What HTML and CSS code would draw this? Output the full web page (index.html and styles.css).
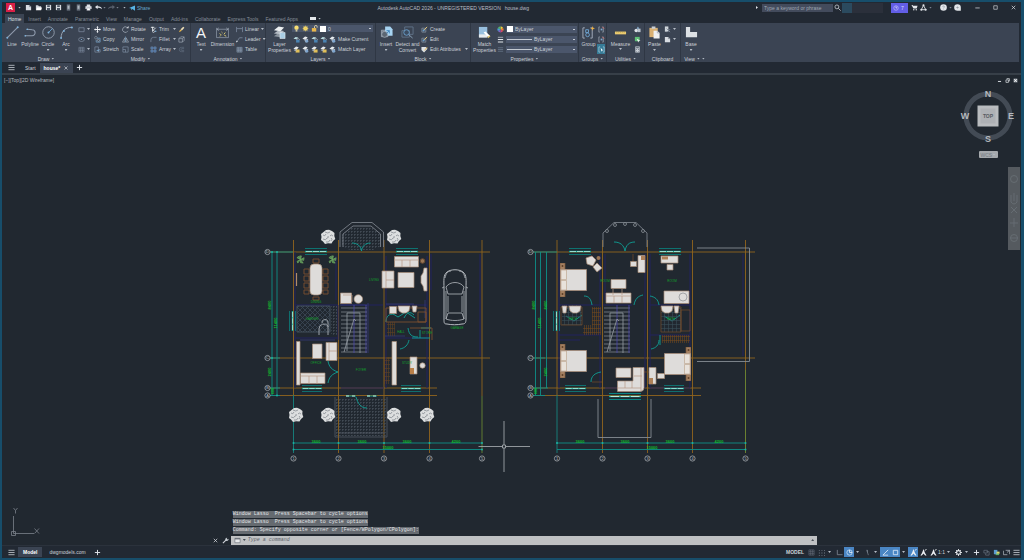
FILE: index.html
```html
<!DOCTYPE html>
<html lang="en">
<head>
<meta charset="utf-8">
<title>Autodesk AutoCAD 2026 - house.dwg</title>
<link rel="stylesheet" href="styles.css">
</head>
<body>
<svg class="defs" aria-hidden="true">
  <defs>
    <symbol id="i-page" viewBox="0 0 8 8"><path d="M1 1h4l2 2v4H1z" fill="#d8dce2"/><path d="M5 1v2h2" fill="none" stroke="#59616d" stroke-width=".6"/></symbol>
    <symbol id="i-folder" viewBox="0 0 8 8"><path d="M1 1.500h2.500l1 1H7V6.500H1z" fill="#cfd4da"/><path d="M2.500 4H8L7 7H1z" fill="#fff"/></symbol>
    <symbol id="i-save" viewBox="0 0 8 8"><path d="M1 1h6v6H1z" fill="#d5d9df"/><path d="M2.500 1.500h3v1.800h-3zM2.300 4.500h3.400V7H2.300z" fill="#4a5462"/></symbol>
    <symbol id="i-print" viewBox="0 0 8 8"><path d="M2 .5h4v2H2zM.5 2.500h7v3.300h-7z" fill="#dde1e6"/><path d="M2 4.500h4v3H2z" fill="#fff" stroke="#59616d" stroke-width=".4"/></symbol>
    <symbol id="i-phone" viewBox="0 0 8 8"><path d="M2 .5h4v7H2z" fill="#6d7682"/><path d="M3 2h2v3.500H3z" fill="#aeb6bf"/></symbol>
    <symbol id="i-undo" viewBox="0 0 8 8"><path d="M0 3.500 3 1v1.700c3 0 4.600 1 5 3.300C6.600 4.600 5 4.300 3 4.300V6z" fill="#dfe3e8"/></symbol>
    <symbol id="i-redo" viewBox="0 0 8 8"><path d="M8 3.500 5 1v1.700C2 2.700.400 3.700 0 6c1.400-1.400 3-1.700 5-1.700V6z" fill="#59616d"/></symbol>
    <symbol id="i-share" viewBox="0 0 8 8"><path d="M0 4 8 .5v7L4.500 5.300 3 7V4.800z" fill="#58b4e6"/></symbol>
    <symbol id="i-line" viewBox="0 0 12 12"><path d="M1 11 11 1" stroke="#8f9bad" fill="none"/><circle cx="1.200" cy="10.800" r=".9" fill="#7fb3dc"/><circle cx="10.800" cy="1.200" r=".9" fill="#7fb3dc"/></symbol>
    <symbol id="i-pline" viewBox="0 0 12 12"><path d="M1 9h6.500a2.500 2.500 0 0 0 0-5.500L3 3" stroke="#8f9bad" fill="none"/><circle cx="1.200" cy="9" r=".8" fill="#7fb3dc"/><circle cx="3" cy="3" r=".8" fill="#7fb3dc"/></symbol>
    <symbol id="i-circle" viewBox="0 0 12 12"><circle cx="6" cy="6" r="5.300" stroke="#9aa5b5" fill="none" stroke-width=".8"/><path d="M6 6 9.700 2.300" stroke="#6aa7d8" stroke-width=".8"/><circle cx="6" cy="6" r=".9" fill="#7fb3dc"/></symbol>
    <symbol id="i-arc" viewBox="0 0 12 12"><path d="M1 11C1 5 5 1.200 11 1.200" stroke="#9aa5b5" fill="none" stroke-width=".9"/><circle cx="1" cy="11" r=".9" fill="#7fb3dc"/><circle cx="3.600" cy="4.600" r=".9" fill="#7fb3dc"/><circle cx="11" cy="1.300" r=".9" fill="#7fb3dc"/></symbol>
    <symbol id="i-rect" viewBox="0 0 8 8"><path d="M1 2h6v4.500H1z" stroke="#7f8ca0" fill="none" stroke-width=".8"/></symbol>
    <symbol id="i-ellipse" viewBox="0 0 8 8"><ellipse cx="4" cy="4" rx="3.300" ry="2.300" stroke="#7f8ca0" fill="none" stroke-width=".8"/><circle cx="4" cy="4" r=".7" fill="#7fb3dc"/></symbol>
    <symbol id="i-hatch" viewBox="0 0 8 8"><path d="M1 1.500h6v5.500H1zM1 3.300h6M1 5.200h6M3 1.500V7M5 1.500V7" stroke="#7f8ca0" fill="none" stroke-width=".6"/></symbol>
    <symbol id="i-move" viewBox="0 0 8 8"><path d="M4 0 5.400 1.700H4.500v1.800h1.800v-.9L8 4 6.300 5.400v-.9H4.500v1.800h.9L4 8 2.600 6.300h.9V4.500H1.700v.9L0 4l1.700-1.400v.9h1.800V1.700h-.9z" fill="#f2f4f7"/></symbol>
    <symbol id="i-copy" viewBox="0 0 8 8"><circle cx="2.200" cy="2" r="1.500" fill="none" stroke="#9ba6b5" stroke-width=".6"/><path d="M3.500 2.500H7V7H2.500V4.500" fill="none" stroke="#7fb3dc" stroke-width=".7"/><circle cx="5" cy="5" r="1.200" fill="none" stroke="#b5bfcc" stroke-width=".6"/></symbol>
    <symbol id="i-stretch" viewBox="0 0 8 8"><path d="M1 1h4v6H1zM5 4v3h2V4z" fill="none" stroke="#8695ab" stroke-width=".7"/><path d="M3 5h3" stroke="#7fb3dc"/></symbol>
    <symbol id="i-rotate" viewBox="0 0 8 8"><path d="M6.700 5.500A3.200 3.200 0 1 1 6 1.800" stroke="#a7b1bf" fill="none" stroke-width=".8"/><path d="M5 2.500h2.500V0z" fill="#dfe3e8"/></symbol>
    <symbol id="i-mirror" viewBox="0 0 8 8"><path d="M3.300 2v5H.500zM4.700 2v5h2.800z" fill="none" stroke="#a7b1bf" stroke-width=".7"/><path d="M4 .5v7" stroke="#7fb3dc" stroke-width=".5"/></symbol>
    <symbol id="i-scale" viewBox="0 0 8 8"><path d="M1 1h6v6H1zM1 4h3v3" fill="none" stroke="#8695ab" stroke-width=".7"/></symbol>
    <symbol id="i-trim" viewBox="0 0 8 8"><path d="M1 1.500h4M3 1v4.500M3 5.500 6.500 2" stroke="#eef1f4" fill="none"/><circle cx="4" cy="6.300" r="1.100" fill="none" stroke="#eef1f4" stroke-width=".7"/><circle cx="6.500" cy="6" r=".9" fill="#7fb3dc"/></symbol>
    <symbol id="i-fillet" viewBox="0 0 8 8"><path d="M1 7V4.500A3 3 0 0 1 4 1.500h3.500" stroke="#7f8ca0" fill="none" stroke-width=".8"/></symbol>
    <symbol id="i-array" viewBox="0 0 8 8"><path d="M1 1h2.500v2.500H1zM4.500 1H7v2.500H4.500zM1 4.500h2.500V7H1zM4.500 4.500H7V7H4.500z" fill="#46658f" stroke="#7fa6d0" stroke-width=".5"/></symbol>
    <symbol id="i-erase" viewBox="0 0 8 8"><path d="m1 7 1.500-3 2 1.500z" fill="#e9b74b"/><path d="m3 3.800 3-3 1.300 1.300-2.800 3z" fill="#f0e0b8"/></symbol>
    <symbol id="i-cube" viewBox="0 0 8 8"><path d="M1 3h4v4H1zM1 3l2-2h4v4L5 7M5 3l2-2" stroke="#a7b1bf" fill="none" stroke-width=".7"/></symbol>
    <symbol id="i-offset" viewBox="0 0 8 8"><path d="M7 1.500H4a2.500 2.500 0 0 0 0 5h3M7 3H4.500a1 1 0 0 0 0 2H7" stroke="#667386" fill="none" stroke-width=".7"/></symbol>
    <symbol id="i-dim" viewBox="0 0 14 12"><path d="M.5 1v10.500M13.500 1v10.500M1 2.500h12M.5 11.500h13" stroke="#9aa5b5" fill="none" stroke-width=".7"/><path d="m3 1-2 1.500L3 4M11 1l2 1.500L11 4" fill="none" stroke="#b6c0cd" stroke-width=".6"/><path d="m4 7 2 2M10 6 8.500 8M6 5.500l1 1M9 9l2 1M4 10l1-.6" stroke="#e2cf74"/></symbol>
    <symbol id="i-linear" viewBox="0 0 8 8"><path d="M.5 1v6M7.500 1v6M1 3h6" stroke="#8695ab" fill="none" stroke-width=".8"/></symbol>
    <symbol id="i-leader" viewBox="0 0 8 8"><path d="M1 6.500 4 2h3.500" stroke="#8695ab" fill="none" stroke-width=".8"/><path d="m0 7.500.600-2.500 1.600 1.200z" fill="#dfe3e8"/></symbol>
    <symbol id="i-table" viewBox="0 0 8 8"><path d="M1 1.500h6v5.500H1zM1 3.500h6M1 5.200h6M3 1.500V7M5 1.500V7" stroke="#8997aa" fill="#59677c" stroke-width=".6"/></symbol>
    <symbol id="i-layers" viewBox="0 0 14 14"><path d="m1 11 5-3.500 6 1-4 3.500z" fill="#8c959f"/><path d="m1 8 5-3.500 6 1-4 3.500z" fill="#b4bbc3"/><path d="m1 4.500 5-4 6 1-4 4.200z" fill="#edf0f2"/><path d="M7.500 7H13v6.500H7.500z" fill="#a9cde4" stroke="#e6edf2" stroke-width=".6"/></symbol>
    <symbol id="i-layer" viewBox="0 0 8 8"><path d="M.5 3 3 1l3 .6L3.800 3.800z" fill="#b9dbe0"/><path d="M3.500 4.300h4v3.200h-4z" fill="#4b84b3"/><path d="m4 4 2-1.200 1.500 1.500" stroke="#e7edf0" stroke-width=".7" fill="none"/></symbol>
    <symbol id="i-layer2" viewBox="0 0 8 8"><path d="M.5 3 3.500.500l3 1L4 4.500z" fill="#e6eaed"/><path d="M2.500 4.300 7 3v3.500L4 7.500z" fill="#aab5c2"/><circle cx="5.500" cy="6" r="1.600" fill="#7fa6cf"/></symbol>
    <symbol id="i-layer3" viewBox="0 0 8 8"><path d="M.5 3 3.500.500l3 1L4 4.500z" fill="#e6eaed"/><path d="M3 4h4.500v3.500H3z" fill="#e1bf57"/><path d="m1 4.500 3 1" stroke="#aab5c2"/></symbol>
    <symbol id="i-bulb" viewBox="0 0 8 8"><circle cx="4" cy="3" r="2.500" fill="#f7dd72"/><path d="M3 5h2v2.500H3z" fill="#d3c9a0"/></symbol>
    <symbol id="i-sun" viewBox="0 0 8 8"><circle cx="4" cy="4" r="2.600" fill="#f7dd72"/><path d="M4 .5v7M.5 4h7M1.500 1.500l5 5M6.500 1.500l-5 5" stroke="#e9c95a" stroke-width=".5"/></symbol>
    <symbol id="i-lock" viewBox="0 0 8 8"><path d="M1 3.500h5v4H1z" fill="#e9b74b"/><path d="M4 3.500V2a1.500 1.500 0 0 1 3 0v1" stroke="#e8dcb5" fill="none"/></symbol>
    <symbol id="i-insert" viewBox="0 0 14 14"><path d="M1.500 4.500h7v7h-7z" fill="#78828f" stroke="#a9b3bf" stroke-width=".7"/><path d="M5.500.500h5.500l2.500 3v7h-5l-3-4z" fill="#a7d4f2"/><circle cx="5" cy="9" r="3.200" fill="#5b6673" stroke="#a9b3bf" stroke-width=".7"/><path d="m7 8 3-3M10 8V5H7" stroke="#3e84bc" fill="none"/></symbol>
    <symbol id="i-detect" viewBox="0 0 14 14"><path d="M4 1h9v8H4zM1 5h8v7H1z" fill="none" stroke="#65788e" stroke-width=".9"/><circle cx="6" cy="7" r="3" fill="#3b4b60" stroke="#6aa0cc"/><path d="m8.500 9.500 4 3.500" stroke="#8aa3bb"/></symbol>
    <symbol id="i-block" viewBox="0 0 8 8"><path d="M1 2.500h4.500V7H1z" fill="none" stroke="#98a4b3" stroke-width=".7"/><path d="M3.500 4.500 7 1" stroke="#f1d17b"/><circle cx="3" cy="5" r="1.200" fill="#6d9fc7"/></symbol>
    <symbol id="i-tag" viewBox="0 0 8 8"><path d="M.5 1h5l2 2-4 4.500-3-3z" fill="#dfe3e6"/><path d="m4 5 3-3.500" stroke="#e5b34a"/></symbol>
    <symbol id="i-match" viewBox="0 0 14 14"><path d="M1 1h9v11H1z" fill="#97bfdf"/><path d="M1 9h9v3.500H1z" fill="#e7ebee"/><path d="m6 7 5 5 2-1.500-5-4.500z" fill="#fff"/><path d="m10.500 12.500 2.500-2" stroke="#e4c66e" stroke-width="1.500"/></symbol>
    <symbol id="i-wheel" viewBox="0 0 8 8"><path d="M4 4V.5A3.500 3.500 0 0 1 7 2.200z" fill="#f2cf3d"/><path d="M4 4 7 2.200a3.500 3.500 0 0 1 0 3.600z" fill="#ef8132"/><path d="m4 4 3 1.800A3.500 3.500 0 0 1 4 7.500z" fill="#d9486c"/><path d="M4 4v3.500a3.500 3.500 0 0 1-3-1.700z" fill="#7d62c9"/><path d="M4 4 1 5.800a3.500 3.500 0 0 1 0-3.600z" fill="#4c9ed8"/><path d="M4 4 1 2.200A3.500 3.500 0 0 1 4 .5z" fill="#56b56b"/></symbol>
    <symbol id="i-weights" viewBox="0 0 8 8"><path d="M1 1.500h6" stroke="#e3e7eb" stroke-width=".7"/><path d="M1 4h6M1 6.800h6" stroke="#e3e7eb" stroke-width="1.300"/></symbol>
    <symbol id="i-ltype" viewBox="0 0 8 8"><path d="M1 2h6M1 4h6M1 6h6" stroke="#69768a" stroke-width=".9"/></symbol>
    <symbol id="i-group" viewBox="0 0 14 14"><path d="M3 2H1v11h2M9 2h2v11H9" fill="none" stroke="#a7b1bf"/><path d="M4 4h3v3H4z" fill="none" stroke="#6ea3cf"/><circle cx="6" cy="9.500" r="2" fill="none" stroke="#6ea3cf"/><path d="m11.500 0 .6 1.800 1.900.700-1.900.600-.6 1.900-.6-1.900L9 2.500l1.900-.7z" fill="#f0b244"/></symbol>
    <symbol id="i-ungroup" viewBox="0 0 8 8"><path d="M2 1H1v6h1M5 1h1v6H5" stroke="#a7b1bf" fill="none" stroke-width=".8"/><path d="M3 3h2v2H3z" fill="#7fa6cf"/><path d="m5 1 2 2" stroke="#d8605d"/></symbol>
    <symbol id="i-gselect" viewBox="0 0 8 8"><path d="M2.500 1H1v6h1.500M5.500 1H7v6H5.500" stroke="#b9d9e8" fill="none" stroke-width=".7"/><path d="m3 2 3 3-1.300.2L4 6.500z" fill="#fff"/></symbol>
    <symbol id="i-measure" viewBox="0 0 14 14"><path d="M1 6h12v3H1z" fill="#eacb70"/><path d="M3 6v1.300M5 6v1.300M7 6v1.300M9 6v1.300M11 6v1.300" stroke="#a98b38" stroke-width=".5"/></symbol>
    <symbol id="i-shapes" viewBox="0 0 8 8"><circle cx="2.500" cy="5" r="2" fill="#dfe3e8"/><path d="M4 3h3.500v4H4z" fill="#b9c3ce"/><path d="M3 3 4.500.500 6 3z" fill="#8fb5d6"/></symbol>
    <symbol id="i-select" viewBox="0 0 8 8"><path d="M1 1h5.500v5H1z" fill="#5fbf77"/><path d="m3 3 4.500 2-1.800.500L5 7.500z" fill="#eef4f0"/></symbol>
    <symbol id="i-calc" viewBox="0 0 8 8"><path d="M1.500.500h5v7h-5z" fill="#c7cdd4"/><path d="M2.500 1.500h3v1.200h-3zM2.500 3.800h.8v.8h-.8zM4.700 3.800h.8v.8h-.8zM2.500 5.600h.8v.8h-.8zM4.700 5.600h.8v.8h-.8z" fill="#4a5462"/></symbol>
    <symbol id="i-paste" viewBox="0 0 14 14"><path d="M1.500 2h9v10h-9z" fill="#d9b072"/><path d="M4 .5h4v2.500H4z" fill="#c8ced6"/><path d="M6 5h4l2.500 2.500V13.500H6z" fill="#eef0f2"/><path d="M10 5v2.500h2.500" fill="none" stroke="#8d959f" stroke-width=".6"/></symbol>
    <symbol id="i-cut" viewBox="0 0 8 8"><path d="M1 .5h4v6H1z" fill="#cfd5db"/><path d="m3 3 4 4M7 3.500 3.500 7" stroke="#7e8997" fill="none"/></symbol>
    <symbol id="i-base" viewBox="0 0 14 14"><path d="M1 1h4.500v5.500H13V12H1z" fill="#dde1e5"/></symbol>
    <symbol id="i-cart" viewBox="0 0 8 8"><path d="M.5 1h1.300l.5 1H7.500L6.500 5H2.800z" fill="#e2e5e9"/><circle cx="3.200" cy="6.600" r=".8" fill="#e2e5e9"/><circle cx="6" cy="6.600" r=".8" fill="#e2e5e9"/></symbol>
    <symbol id="i-tri" viewBox="0 0 8 8"><path d="M4 1.500 1.500 6.500h5z" fill="none" stroke="#e2e5e9"/><circle cx="4" cy="1.500" r="1.200" fill="#e2e5e9"/><circle cx="1.500" cy="6.500" r="1.200" fill="#e2e5e9"/><circle cx="6.500" cy="6.500" r="1.200" fill="#e2e5e9"/></symbol>
    <symbol id="i-help" viewBox="0 0 8 8"><circle cx="4" cy="4" r="3.800" fill="#e2e5e9"/><path d="M3 3.200a1 1 0 1 1 1.300 1L4 4.800M4 5.500v.6" stroke="#7b838e" fill="none" stroke-width=".6"/></symbol>
    <symbol id="i-assist" viewBox="0 0 8 8"><path d="M4 .2a3.800 3.800 0 1 0 0 7.600h3.800V4A3.800 3.800 0 0 0 4 .2z" fill="#e2e5e9"/><path d="M2.500 4h3M4 2.800v2.500" stroke="#8c939d" stroke-width=".7"/></symbol>
    <symbol id="i-grid" viewBox="0 0 8 8"><path d="M1 1v6M3 1v6M5 1v6M7 1v6M1 1h6M1 3h6M1 5h6M1 7h6" stroke="#69727e" stroke-width=".6"/></symbol>
    <symbol id="i-snap" viewBox="0 0 8 8"><path d="M1 1h1v1H1zM4 1h1v1H4zM7 1h1v1H7zM1 4h1v1H1zM4 4h1v1H4zM7 4h1v1H7zM1 7h1v1H1zM4 7h1v1H4zM7 7h1v1H7z" fill="#7d8692"/></symbol>
    <symbol id="i-ortho" viewBox="0 0 8 8"><path d="M1.500 1v5.500H7.500" fill="none" stroke="#828b97" stroke-width=".9"/></symbol>
    <symbol id="i-polar" viewBox="0 0 8 8"><circle cx="4" cy="4" r="3" fill="none" stroke="#d9e9f9" stroke-width=".8"/><path d="M4 4V1M4 4h3" stroke="#fff" stroke-width=".8"/></symbol>
    <symbol id="i-iso" viewBox="0 0 8 8"><path d="m3 1 2 6M4 1v3" stroke="#7d8692" fill="none" stroke-width=".8"/></symbol>
    <symbol id="i-track" viewBox="0 0 8 8"><path d="m1 7 6-6M1 7h6" stroke="#e4effb" fill="none" stroke-width=".9"/></symbol>
    <symbol id="i-osnap" viewBox="0 0 8 8"><path d="M1.500 1.500h5v5h-5z" stroke="#e4effb" fill="none" stroke-width=".9"/></symbol>
    <symbol id="i-person" viewBox="0 0 8 8"><path d="M4 0 2.300 4.500.500 7.500h1.600L4 5l1.900 2.500h1.600L5.700 4.500z" fill="#eef1f5"/><path d="m5.500 1.500 2-1" stroke="#eef1f5"/></symbol>
    <symbol id="i-gear" viewBox="0 0 8 8"><circle cx="4" cy="4" r="2.200" stroke="#eef1f5" stroke-width="1.300" fill="none"/><path d="M4 0v1.500M4 6.500V8M0 4h1.500M6.500 4H8M1.200 1.200l1 1M5.800 5.800l1 1M6.800 1.200l-1 1M2.200 5.800l-1 1" stroke="#eef1f5"/></symbol>
    <symbol id="i-plus" viewBox="0 0 8 8"><path d="M4 1v6M1 4h6" stroke="#dfe3e8" stroke-width="1.100"/></symbol>
    <symbol id="i-isolate" viewBox="0 0 8 8"><path d="M1 1.500h4v3H1zM4 3h3v4H3V5" stroke="#67717e" fill="none" stroke-width=".8"/></symbol>
    <symbol id="i-hw" viewBox="0 0 8 8"><path d="M1 1h4v5H1z" fill="#5a9bd0"/><path d="M4 3h3.500v2.500H4z" fill="#d9d76b"/><path d="M3 5.500h4V7H3z" fill="#62b06b"/></symbol>
    <symbol id="i-clean" viewBox="0 0 8 8"><path d="M.5 2v4.500H5M3 1.500h4.500V6M4.500 4l3-2.500" stroke="#b7bec7" fill="none" stroke-width=".8"/></symbol>
    <symbol id="i-menu" viewBox="0 0 8 8"><path d="M.5 1.500h7M.5 4h7M.5 6.500h7" stroke="#c9ced5" stroke-width=".9"/></symbol>
    <symbol id="i-min" viewBox="0 0 8 8"><path d="M1.500 4.500h5" stroke="#dfe3e8" stroke-width=".8"/></symbol>
    <symbol id="i-max" viewBox="0 0 8 8"><path d="M2 2h4v4H2z" stroke="#dfe3e8" fill="none" stroke-width=".7"/></symbol>
    <symbol id="i-docmin" viewBox="0 0 8 8"><path d="M1.500 5.500h5" stroke="#dfe3e8" stroke-width="1.500"/></symbol>
    <symbol id="i-docmax" viewBox="0 0 8 8"><path d="M3 2V1h4v4H6M1.500 3h4v4h-4z" stroke="#dfe3e8" fill="none" stroke-width="1.100"/></symbol>
    <symbol id="i-docclose" viewBox="0 0 8 8"><path d="M1 1h6v6H1z" fill="#9ba1a8"/><path d="m2 2 4 4M6 2 2 6" stroke="#fff" stroke-width="1.200"/></symbol>
    <symbol id="i-close" viewBox="0 0 8 8"><path d="m2 2 4 4M6 2 2 6" stroke="#dfe3e8" stroke-width=".8"/></symbol>
    <symbol id="i-search" viewBox="0 0 8 8"><circle cx="3.300" cy="3.300" r="2.200" stroke="#c8cdd4" fill="none" stroke-width=".9"/><path d="m5 5 2.500 2.500" stroke="#c8cdd4"/></symbol>
    <symbol id="i-wrench" viewBox="0 0 8 8"><path d="m1 7 3.500-3.500" stroke="#cfd4da" stroke-width="1.300"/><path d="M4 3.800A2 2 0 0 1 6 .8L5.300 2.200l.8.600L7.400 2a2 2 0 0 1-2.700 2.400z" fill="#cfd4da"/></symbol>
    <symbol id="tree" viewBox="-8 -8 16 16"><path d="M-2-7 1-7.300 4-6 6.500-4 6.300-1 7.300 2 5 4 3.500 6.500 0 6.300-3 7-5 4.500-7 3-6.500 0-7-3-4.500-5z" fill="#dcdedf"/><path d="M-3-5Q0-3 2-5M-5-2Q-3 0-2-3M-5 2Q-2 4-1 1M-2 5Q1 6 2 3M3 4Q5 2 3 1M5-1Q3-3 2-1M0-1Q1 1-1 1" stroke="#7b8188" stroke-width=".7" fill="none"/></symbol>
    <symbol id="plant" viewBox="-5 -5 10 10"><path d="M0 0-1-4 1-4zM0 0 4-2 3.500 1zM0 0 3 4 0 3.500zM0 0-3 4-3.800 2zM0 0-4-2-2-3.500z" fill="#4f8a4a" stroke="#6ea664" stroke-width=".8"/></symbol>
    <symbol id="bed" viewBox="0 0 28 34"><path d="M0 0h5v34H0z" fill="#a48062" stroke="#79573a" stroke-width=".7"/><path d="M.5 6.500h26v21H.5z" fill="#dedcda" stroke="#a58c78" stroke-width=".8"/><path d="M1 7h5.500v9.500H1zM1 17.500h5.500v9.500H1z" fill="#e8e2db" stroke="#b89f87" stroke-width=".6"/><circle cx="2.500" cy="3" r="1" fill="#5e4128"/><circle cx="2.500" cy="31" r="1" fill="#5e4128"/></symbol>
    <symbol id="win" viewBox="0 0 22 7" preserveAspectRatio="none"><path d="M0 .5h22M0 6.500h22" stroke="#0a8582" stroke-width=".8"/><path d="M0 3.500h22" stroke="#0fae9c" stroke-width="1.400"/><path d="M1 3.500h20" stroke="#b9eadf" stroke-width=".8" stroke-dasharray="6 1"/></symbol>
    <symbol id="stairs" viewBox="0 0 27 48"><path d="M1 3h26M1 7h26M1 11h26M1 15h26M1 19h26M1 23h26M1 27h26M1 31h26M1 35h26M1 39h26M1 43h26M1 47h26" stroke="#7d838a" stroke-width=".8"/><path d="M14 0v48M26 0v48" stroke="#4d48ad" stroke-width=".8"/><path d="M7 46V8h13v40M4 47 14 14l2 2" fill="none" stroke="#969ca3" stroke-width=".8"/></symbol>
    <pattern id="pave" width="3" height="3" patternUnits="userSpaceOnUse"><path d="M0 .5h3M.5 0v3" stroke="#48515b" stroke-width=".6" stroke-dasharray="2 1"/></pattern>
    <pattern id="rug" width="5" height="5" patternUnits="userSpaceOnUse"><path d="M0 0 5 5M5 0 0 5" stroke="#3b4856" stroke-width=".8"/></pattern>
    <pattern id="brick" width="2" height="4" patternUnits="userSpaceOnUse"><path d="M.5 0v4M0 .5h2" stroke="#6e461f" stroke-width=".6"/></pattern>
    <pattern id="tile" width="4" height="4" patternUnits="userSpaceOnUse"><path d="M0 .5h4M.5 0v4" stroke="#394d58" stroke-width=".6"/></pattern>
  </defs>
</svg>

<div class="window">
  <header class="titlebar">
    <div class="quick">
      <button class="app" aria-label="Application menu"><b>A</b></button><i class="chev"></i>
      <button class="ib first" aria-label="New"><svg><use href="#i-page"/></svg></button>
      <button class="ib" aria-label="Open"><svg><use href="#i-folder"/></svg></button>
      <button class="ib" aria-label="Save"><svg><use href="#i-save"/></svg></button>
      <button class="ib" aria-label="Save as"><svg><use href="#i-save"/></svg></button>
      <button class="ib" aria-label="Open from web"><svg><use href="#i-phone"/></svg></button>
      <button class="ib" aria-label="Save to mobile"><svg><use href="#i-phone"/></svg></button>
      <button class="ib" aria-label="Plot"><svg><use href="#i-print"/></svg></button>
      <button class="ib" aria-label="Undo"><svg><use href="#i-undo"/></svg></button><i class="chev dim"></i>
      <button class="ib" aria-label="Redo"><svg><use href="#i-redo"/></svg></button><i class="chev dim"></i><i class="chev more"></i>
      <button class="share"><svg><use href="#i-share"/></svg>Share</button>
    </div>
    <div class="caption"><span>Autodesk AutoCAD 2026 - UNREGISTERED VERSION</span><span>house.dwg</span></div>
    <div class="account">
      <i class="play"></i>
      <input class="search" type="text" placeholder="Type a keyword or phrase" aria-label="Search">
      <button class="ib" aria-label="Find"><svg><use href="#i-search"/></svg></button>
      <span class="user"></span>
      <button class="trial"><svg viewBox="0 0 8 8"><circle cx="4" cy="4" r="3" fill="none" stroke="#c9c5ff" stroke-width=".8"/><path d="M4 2v2h1.500" fill="none" stroke="#fff" stroke-width=".8"/></svg>7</button>
      <button class="ib" aria-label="Store"><svg><use href="#i-cart"/></svg></button>
      <button class="ib" aria-label="Autodesk apps"><svg><use href="#i-tri"/></svg></button><i class="chev dim"></i>
      <button class="ib help" aria-label="Help"><svg><use href="#i-help"/></svg></button><i class="chev dim"></i>
      <button class="ib" aria-label="Assistant"><svg><use href="#i-assist"/></svg></button>
      <div class="controls">
        <button class="ib" aria-label="Minimize"><svg><use href="#i-min"/></svg></button>
        <button class="ib" aria-label="Maximize"><svg><use href="#i-max"/></svg></button>
        <button class="ib" aria-label="Close"><svg><use href="#i-close"/></svg></button>
      </div>
    </div>
  </header>

  <nav class="tabs">
    <button class="on">Home</button><button>Insert</button><button>Annotate</button><button>Parametric</button><button>View</button><button>Manage</button><button>Output</button><button>Add-ins</button><button>Collaborate</button><button>Express Tools</button><button>Featured Apps</button><button class="mini" aria-label="Ribbon display"><span></span><i class="chev"></i></button>
  </nav>

  <section class="ribbon">
    <div class="panel p-draw">
      <div class="body">
        <button class="big"><svg><use href="#i-line"/></svg>Line</button>
        <button class="big"><svg><use href="#i-pline"/></svg>Polyline</button>
        <button class="big"><svg><use href="#i-circle"/></svg>Circle<i class="chev"></i></button>
        <button class="big"><svg><use href="#i-arc"/></svg>Arc<i class="chev"></i></button>
        <div class="col">
          <button aria-label="Rectangle"><svg><use href="#i-rect"/></svg><i class="chev"></i></button>
          <button aria-label="Ellipse"><svg><use href="#i-ellipse"/></svg><i class="chev"></i></button>
          <button aria-label="Hatch"><svg><use href="#i-hatch"/></svg><i class="chev"></i></button>
        </div>
      </div>
      <h2>Draw <i class="chev"></i></h2>
    </div>
    <div class="panel p-modify">
      <div class="body">
        <div class="col c28"><button><svg><use href="#i-move"/></svg>Move</button><button><svg><use href="#i-copy"/></svg>Copy</button><button><svg><use href="#i-stretch"/></svg>Stretch</button></div>
        <div class="col c28"><button><svg><use href="#i-rotate"/></svg>Rotate</button><button><svg><use href="#i-mirror"/></svg>Mirror</button><button><svg><use href="#i-scale"/></svg>Scale</button></div>
        <div class="col c28"><button><svg><use href="#i-trim"/></svg>Trim<i class="chev end"></i></button><button><svg><use href="#i-fillet"/></svg>Fillet<i class="chev end"></i></button><button><svg><use href="#i-array"/></svg>Array<i class="chev end"></i></button></div>
        <div class="col"><button aria-label="Erase"><svg><use href="#i-erase"/></svg></button><button aria-label="Explode"><svg><use href="#i-cube"/></svg></button><button aria-label="Offset"><svg><use href="#i-offset"/></svg></button></div>
      </div>
      <h2>Modify <i class="chev"></i></h2>
    </div>
    <div class="panel p-anno">
      <div class="body">
        <button class="big"><span class="glyph">A</span>Text<i class="chev"></i></button>
        <button class="big wide"><svg><use href="#i-dim"/></svg>Dimension</button>
        <div class="col c28"><button><svg><use href="#i-linear"/></svg>Linear<i class="chev end"></i></button><button><svg><use href="#i-leader"/></svg>Leader<i class="chev end"></i></button><button><svg><use href="#i-table"/></svg>Table</button></div>
      </div>
      <h2>Annotation <i class="chev"></i></h2>
    </div>
    <div class="panel p-layers">
      <div class="body">
        <button class="big wide two"><svg><use href="#i-layers"/></svg>Layer Properties</button>
        <div class="col grow">
          <div class="combo"><svg><use href="#i-bulb"/></svg><svg><use href="#i-sun"/></svg><svg><use href="#i-lock"/></svg><span class="swatch"></span><select aria-label="Layer"><option>0</option></select></div>
          <div class="icons"><button aria-label="Off"><svg><use href="#i-layer"/></svg></button><button aria-label="Isolate"><svg><use href="#i-layer2"/></svg></button><button aria-label="Freeze"><svg><use href="#i-layer"/></svg></button><button aria-label="Lock"><svg><use href="#i-layer"/></svg></button><button><svg><use href="#i-layer2"/></svg>Make Current</button></div>
          <div class="icons"><button aria-label="Turn all on"><svg><use href="#i-layer3"/></svg></button><button aria-label="Unisolate"><svg><use href="#i-layer2"/></svg></button><button aria-label="Thaw all"><svg><use href="#i-layer3"/></svg></button><button aria-label="Unlock"><svg><use href="#i-layer3"/></svg></button><button><svg><use href="#i-layer2"/></svg>Match Layer</button></div>
        </div>
      </div>
      <h2>Layers <i class="chev"></i></h2>
    </div>
    <div class="panel p-block">
      <div class="body">
        <button class="big"><svg><use href="#i-insert"/></svg>Insert<i class="chev"></i></button>
        <button class="big wide"><svg><use href="#i-detect"/></svg>Detect and Convert</button>
        <div class="col grow"><button><svg><use href="#i-block"/></svg>Create</button><button><svg><use href="#i-block"/></svg>Edit</button><button><svg><use href="#i-tag"/></svg>Edit Attributes<i class="chev end"></i></button></div>
      </div>
      <h2>Block <i class="chev"></i></h2>
    </div>
    <div class="panel p-props">
      <div class="body">
        <button class="big wide"><svg><use href="#i-match"/></svg>Match Properties</button>
        <div class="col grow">
          <div class="prop"><svg><use href="#i-wheel"/></svg><div class="combo"><span class="swatch"></span><select aria-label="Color"><option>ByLayer</option></select></div></div>
          <div class="prop"><svg><use href="#i-weights"/></svg><div class="combo"><span class="stroke"></span><select aria-label="Lineweight"><option>ByLayer</option></select></div></div>
          <div class="prop"><svg><use href="#i-ltype"/></svg><div class="combo"><span class="stroke"></span><select aria-label="Linetype"><option>ByLayer</option></select></div></div>
        </div>
      </div>
      <h2>Properties <i class="chev"></i></h2>
    </div>
    <div class="panel p-groups">
      <div class="body">
        <button class="big"><svg><use href="#i-group"/></svg>Group</button>
        <div class="col"><button aria-label="Ungroup"><svg><use href="#i-ungroup"/></svg></button><button aria-label="Group edit"><svg><use href="#i-ungroup"/></svg></button><button class="active" aria-label="Group selection"><svg><use href="#i-gselect"/></svg></button></div>
      </div>
      <h2>Groups <i class="chev"></i></h2>
    </div>
    <div class="panel p-utils">
      <div class="body">
        <button class="big wide"><svg><use href="#i-measure"/></svg>Measure<i class="chev"></i></button>
        <div class="col"><button aria-label="Quick select"><svg><use href="#i-shapes"/></svg></button><button aria-label="Select all"><svg><use href="#i-select"/></svg></button><button aria-label="Calculator"><svg><use href="#i-calc"/></svg></button></div>
      </div>
      <h2>Utilities <i class="chev"></i></h2>
    </div>
    <div class="panel p-clip">
      <div class="body">
        <button class="big"><svg><use href="#i-paste"/></svg>Paste<i class="chev"></i></button>
        <div class="col"><button aria-label="Cut"><svg><use href="#i-cut"/></svg><i class="chev"></i></button><button aria-label="Copy clip"><svg><use href="#i-page"/></svg><i class="chev"></i></button></div>
      </div>
      <h2>Clipboard</h2>
    </div>
    <div class="panel p-view">
      <div class="body"><button class="big"><svg><use href="#i-base"/></svg>Base<i class="chev"></i></button></div>
      <h2>View <i class="chev"></i><i class="chev"></i></h2>
    </div>
  </section>

  <nav class="files">
    <button class="ib" aria-label="File tabs menu"><svg><use href="#i-menu"/></svg></button>
    <button class="file">Start</button>
    <button class="file on">house*<svg><use href="#i-close"/></svg></button>
    <button class="ib" aria-label="New drawing"><svg><use href="#i-plus"/></svg></button>
  </nav>

  <main class="canvas">
    <svg class="drawing" viewBox="2 75 1019 470" role="img" aria-label="House floor plans">
      <!-- ground floor: axes -->
      <g fill="none" stroke="#91641d" stroke-width=".9">
        <path d="M293.500 240V395M338.500 240V453M384 240V453M429.500 240V453M482 240V396M267 252H490M267 358H490M267 388H437M267 395.500H437"/>
        <path d="M293.500 395V453" stroke="#16837f"/><path d="M482 396V453" stroke="#688532"/>
      </g>
      <g fill="none" stroke="#0d8f88" stroke-width=".9">
        <path d="M272 252V395.500M277 252V395.500M267 252H293M267 358H280M267 388H280M267 395.500H280M293 443H482M293 449.500H482"/>
      </g>
      <g fill="none" stroke="#22225f" stroke-width="1"><path d="M295 305H338V340M295 338H338M295 252V388M336 256V300M341 305H383M386 256V388M427 256V388M386 305H427M386 338H427M480 254V356M431 254V290M341 388H384"/></g>
      <g fill="none" stroke="#3a3c90" stroke-width=".6"><path d="M368 303v50M340 305h27M386 304h28M425 300v18M300 340h35M385 336h20"/></g>
      <!-- porch, terrace -->
      <path d="M342 246V235L352 227H372L381 235V246L373 250H350Z" fill="url(#pave)"/>
      <path d="M340 247V232L352 222.500H372L383.500 232V247M343 247V234L353 226H371L380.500 234V247" fill="none" stroke="#858c94" stroke-width=".8"/>
      <path d="M336 398h51v38h-51z" fill="url(#pave)"/><path d="M335 397v40h52v-40M338 433h46" fill="none" stroke="#59606a" stroke-width=".7"/>
      <g fill="none" stroke="#0fa096" stroke-width=".9">
        <path d="M352 243c5 0 9 3 9.500 8 .5-5 4-8 9-8M328 361c1 6 4 9 10 11-6 2-9 5-10 11M356 397c2 7 5 11 11 11M346 396h10M367 396h10M386 322c0-6 3-8 8-8M404 318c3-6 6-7 10-3M408 328c1 7 4 9 10 9M400 349c5-1 8-4 9-9M390 312l8 5 8-5 9 6M420 330v8M412 338h18M421 328h10"/>
      </g>
      <path d="M346 396h10M367 396h10" stroke="#bff0e0" stroke-width="1" stroke-dasharray="3 3"/>
      <use href="#win" x="305" y="248" width="22" height="7"/><use href="#win" x="396" y="248" width="22" height="7"/><use href="#win" x="302" y="385" width="20" height="7"/><use href="#win" x="401" y="385" width="20" height="7"/>
      <use href="#win" width="20" height="7" transform="translate(296 311) rotate(90)"/>
      <use href="#tree" x="320" y="229" width="16" height="16"/><use href="#tree" x="386" y="229" width="16" height="16"/><use href="#tree" x="288" y="407" width="16" height="16"/><use href="#tree" x="320" y="407" width="16" height="16"/><use href="#tree" x="386" y="407" width="16" height="16"/><use href="#tree" x="419" y="407" width="16" height="16"/>
      <use href="#plant" x="296" y="255" width="9" height="9"/><use href="#plant" x="328" y="255" width="9" height="9"/>
      <g fill="none" stroke="#7c4f2f" stroke-width=".9"><path d="M304 269h5v5h-5zM304 276h5v5h-5zM304 283h5v5h-5zM304 290h5v4h-5zM323 269h5v5h-5zM323 276h5v5h-5zM323 283h5v5h-5zM323 290h5v4h-5zM313 259h6v4h-6zM313 297h6v3h-6zM386 308h40v14h-40zM418 312h8v10h-8zM410 328h22v12"/></g>
      <path d="M296.500 273v13" stroke="#b28b68" stroke-width="1.200"/>
      <path d="M297 306h33v26h-33z" fill="url(#rug)" stroke="#51606e" stroke-width=".7"/><path d="M331 306h6v30h-6z" fill="url(#pave)"/>
      <path d="M319 335v-6a5 5 0 0 1 9-3v9M322 323a3 3 0 0 1 6-1v5" fill="none" stroke="#9ba1a8" stroke-width="1"/>
      <path d="M384 357h6v27h-6zM387 322h8v14h-8z" fill="url(#brick)" opacity=".8"/>
      <g fill="#dedcda" stroke="#a68b76" stroke-width=".7">
        <rect x="310" y="264" width="12" height="31" rx="4"/><path d="M340.500 293h11v10.500h-11zM382 271h12v17h-12zM394.500 256.500h24v10.500h-24zM398 272.500h16v15h-16zM427 268h-3l-1 5-2 3v7l2 3 1 5h3zM296.500 341.500h3.500v43.500h-3.500zM312.500 344h9.500v14.500h-9.500zM326 342.500h11v18h-11zM300.500 373h24.500v10.500h-24.500zM392 341.500h4.500v43.500H392zM410 357h7v17h-7zM389.500 306.500h7v7h-7zM398 306h12l-1 5-3 2h-4l-3-2zM412 306h5l-1 6h-3z"/><circle cx="358.300" cy="299" r="4.300"/><circle cx="422.500" cy="365.500" r="2.700"/>
      </g>
      <path d="M394 260h25M402 260v7M410 260v7M386 271v17M386 280h8M329 343v17M329 351h8M301 376h24M309 376v8M317 376v8M343 295h9v7" fill="none" stroke="#b79a84" stroke-width=".7"/>
      <circle cx="422.500" cy="261" r="2.300" fill="#997554" stroke="#694932"/><path d="M410 368h4v6h-4z" fill="#b97f48"/>
      <use href="#stairs" x="340" y="305" width="27" height="48"/>
      <!-- car -->
      <g fill="none" stroke="#b4b9be" stroke-width="1">
        <path d="M444 288c0-7-1-13 3-16 4-3 12-3 16 0 4 3 3 9 3 16v31c0 4-1 5-4 5-5 1-10 1-15 0-3 0-3-1-3-5z"/>
        <path d="M446 287c4-6 14-6 18 0l-2 7h-14zM448 313h14l2 6c-5 2-13 2-18 0zM446 291v28M464 291v28M448 296v16M462 296v16M445 278c1-5 3-7 6-7M465 278c-1-5-3-7-6-7M444 287l-2 1M466 287l2 1" stroke-width=".8"/>
      </g>
      <!-- first floor: axes -->
      <g fill="none" stroke="#91641d" stroke-width=".9">
        <path d="M557 240V395M602.500 240V453M647.500 240V453M692.500 240V453M745.500 240V453M531 252H755M531 358H755M531 388H701M531 395.500H701"/><path d="M557 395V453" stroke="#16837f"/><path d="M745.500 370V453" stroke="#688532"/>
      </g>
      <path d="M535.500 252V395.500M540.500 252V395.500M546.500 252V388M531 252H557M531 358H545M531 388H548M531 395.500H545M557 443H745M557 449.500H745" fill="none" stroke="#0d8f88" stroke-width=".9"/>
      <g fill="none" stroke="#22225f" stroke-width="1"><path d="M559 254V388M600 254V388M605 254V300M645 254V388M650 254V388M690 254V388M559 305H601M603 305H632M650 305H690M559 335H601M650 335H690M559 340H580M743 254V356M650 388H690M605 388H645"/></g>
      <path d="M603 247V233L614 222.500H636L647 233V247" fill="none" stroke="#858c94" stroke-width=".8"/>
      <g fill="#212830" stroke="#969da4" stroke-width=".7"><circle cx="607" cy="231" r="1.500"/><circle cx="615" cy="225" r="1.500"/><circle cx="625" cy="224" r="1.500"/><circle cx="635" cy="225" r="1.500"/><circle cx="643" cy="231" r="1.500"/></g>
      <path d="M697 248H749.500V361.500H697M598 399V437.500H651V399" fill="none" stroke="#858b92" stroke-width=".9"/>
      <g fill="none" stroke="#0fa096" stroke-width=".9"><path d="M614 242c6 0 10 3 11 9 1-6 4-9 10-9M592 305c-1-6-3-9-8-9M634 305c1-6 4-9 9-10M650 296c5 1 8 3 9 9M591 382c0-6 4-9 10-10M651 349c5-1 8-4 8-9M566 316l8 5 8-6M664 316l8 5 8-6M660 335v10"/></g>
      <use href="#win" x="569" y="248" width="22" height="7"/><use href="#win" x="659" y="248" width="22" height="7"/><use href="#win" x="565" y="385" width="21" height="7"/><use href="#win" x="664" y="385" width="20" height="7"/><use href="#win" x="609" y="393" width="32" height="7"/>
      <use href="#win" width="20" height="7" transform="translate(560 311) rotate(90)"/>
      <path d="M583 325h18v10h-18zM592 307h9v18h-9zM662 335h28v8h-28z" fill="url(#brick)"/><path d="M562 305h20v20h-20zM661 308h20v24h-20z" fill="url(#tile)"/>
      <path d="M561 307h21v18h-21zM661 307h20v25h-20zM681 310h9v21h-9zM633 254v8M650 372h-7M592 382h10" fill="none" stroke="#754a28" stroke-width=".7"/>
      <use href="#bed" x="560" y="263" width="28" height="34"/><use href="#bed" x="560" y="344" width="28" height="34"/><use href="#bed" width="28" height="34" transform="translate(691 347) scale(-1 1)"/>
      <g fill="#dedcda" stroke="#a68b76" stroke-width=".7">
        <path d="m586 258 6-2 4 4-3 6-6-2zM593 267l4-4 5 5-5 4zM638 255.500h7v17h-7zM630.500 261.500h6v5h-6zM611 279.500h15v9h-15zM606 293h25v10h-25zM661 256h17v7h-17zM667 264.500h6v5.500h-6zM664 291h25v12.500h-25zM616 368h15v9.500h-15zM633 367.500h11v20q0 4-4 4h-22.500v-10.500h15.500zM649 367.500h7v16.500h-7zM657.500 373.500h7v5h-7zM569 306h12l-1 5-3 2h-4l-3-2zM562 306h5l-1 7h-3zM661 306h12l-1 5-3 2h-4l-3-2zM674 306h5l-1 7h-3z"/>
      </g>
      <path d="M606 296h25M614 296v7M622 296v7M613 289v6M622 289v6M641 368v23M634 376h8M618 388h23M625 381v7M632 381v7" fill="none" stroke="#b79a84" stroke-width=".7"/>
      <circle cx="598.500" cy="258" r="2" fill="#997554"/><circle cx="683" cy="297" r="4" fill="none" stroke="#8b8d90" stroke-width=".7"/><path d="M641 256h4v4h-4zM662 256.500h6v3h-6zM649 378h4v6h-4z" fill="#ad8058"/>
      <use href="#stairs" x="603" y="305" width="27" height="48"/>
      <!-- ticks, bubbles and labels -->
      <g fill="#1bb2a2"><circle cx="293.500" cy="443" r="1"/><circle cx="338.500" cy="443" r="1"/><circle cx="384" cy="443" r="1"/><circle cx="429.500" cy="443" r="1"/><circle cx="482" cy="443" r="1"/><circle cx="293.500" cy="449.500" r="1"/><circle cx="482" cy="449.500" r="1"/><circle cx="557" cy="443" r="1"/><circle cx="602.500" cy="443" r="1"/><circle cx="647.500" cy="443" r="1"/><circle cx="692.500" cy="443" r="1"/><circle cx="745.500" cy="443" r="1"/><circle cx="745.500" cy="449.500" r="1"/><circle cx="272" cy="252" r="1"/><circle cx="277" cy="252" r="1"/><circle cx="272" cy="358" r="1"/><circle cx="277" cy="395.500" r="1"/></g>
      <g fill="#212830" stroke="#a3a8ad" stroke-width=".8"><circle cx="293.500" cy="458.500" r="2.600"/><circle cx="338.500" cy="458.500" r="2.600"/><circle cx="384" cy="458.500" r="2.600"/><circle cx="429.500" cy="458.500" r="2.600"/><circle cx="482" cy="458.500" r="2.600"/><circle cx="557" cy="458.500" r="2.600"/><circle cx="602.500" cy="458.500" r="2.600"/><circle cx="647.500" cy="458.500" r="2.600"/><circle cx="692.500" cy="458.500" r="2.600"/><circle cx="745.500" cy="458.500" r="2.600"/><circle cx="267.500" cy="252" r="2.600"/><circle cx="267.500" cy="358" r="2.600"/><circle cx="267.500" cy="388" r="2.600"/><circle cx="267.500" cy="395.500" r="2.600"/><circle cx="530.500" cy="252" r="2.600"/><circle cx="530.500" cy="358" r="2.600"/><circle cx="530.500" cy="388" r="2.600"/><circle cx="530.500" cy="395.500" r="2.600"/></g>
      <g class="axis"><text x="293.500" y="460">1</text><text x="338.500" y="460">2</text><text x="384" y="460">3</text><text x="429.500" y="460">4</text><text x="482" y="460">5</text><text x="557" y="460">1</text><text x="602.500" y="460">2</text><text x="647.500" y="460">3</text><text x="692.500" y="460">4</text><text x="745.500" y="460">5</text><text x="267.500" y="253">D</text><text x="267.500" y="359">C</text><text x="267.500" y="389">B</text><text x="267.500" y="397">A</text><text x="530.500" y="253">D</text><text x="530.500" y="359">C</text><text x="530.500" y="389">B</text><text x="530.500" y="397">A</text></g>
      <g class="dims"><text x="316" y="443">3600</text><text x="362" y="443">3600</text><text x="407" y="443">3600</text><text x="456" y="443">4200</text><text x="388" y="449">15000</text><text x="580" y="443">3600</text><text x="625" y="443">3600</text><text x="670" y="443">3600</text><text x="719" y="443">4200</text><text x="652" y="449">15000</text>
        <text transform="translate(271 305) rotate(-90)">8400</text><text transform="translate(277 323) rotate(-90)">11400</text><text transform="translate(271 372) rotate(-90)">2400</text><text transform="translate(274 391) rotate(-90)">600</text><text transform="translate(535 305) rotate(-90)">8400</text><text transform="translate(541 323) rotate(-90)">11400</text><text transform="translate(547 305) rotate(-90)">8400</text><text transform="translate(547 372) rotate(-90)">2400</text><text transform="translate(537 391) rotate(-90)">600</text></g>
      <g class="rooms"><text x="316" y="303">DINING</text><text x="312" y="320">GARDEN</text><text x="374" y="281">LIVING</text><text x="316" y="364">OFFICE</text><text x="361" y="371">FOYER</text><text x="401" y="333">HALL</text><text x="427" y="334">STORE</text><text x="407" y="364">STUDY</text><text x="457" y="329">GARAGE</text><text x="605" y="282">ROOM</text><text x="672" y="282">ROOM</text><text x="573" y="320">BATH</text><text x="671" y="320">BATH</text></g>
      <!-- cursor -->
      <g stroke="#aeb3b8" stroke-width=".8" fill="none"><path d="M478.500 446.500H502.500M505.500 446.500H530M504 421V445M504 448V472"/><path d="M502.500 445h3v3h-3z"/></g>
      <!-- UCS icon -->
      <g stroke="#7b828b" stroke-width=".8" fill="none"><path d="M13.500 516V533.500H34M11.500 531.500h4v4h-4zM13.500 508l2 2.500 2-2.500M15.500 510.500v3M34.500 528.500l4.500 5M39 528.500l-4.500 5"/></g>
    </svg>
    <span class="viewlabel">[−][Top][2D Wireframe]</span>
    <div class="docbuttons"><button class="ib" aria-label="Minimize drawing"><svg><use href="#i-docmin"/></svg></button><button class="ib" aria-label="Restore drawing"><svg><use href="#i-docmax"/></svg></button><button class="ib" aria-label="Close drawing"><svg><use href="#i-docclose"/></svg></button></div>
    <div class="cube">
      <svg viewBox="0 0 54 54"><circle cx="27" cy="27" r="22" fill="none" stroke="#434b55" stroke-width="5"/><path d="M16.500 16.500h21v21h-21z" fill="#b9bcbf"/><path d="M19.500 19.500h15v15h-15z" fill="#aeb1b5"/><g class="compass"><text x="27" y="8">N</text><text x="27" y="53">S</text><text x="4" y="30">W</text><text x="50" y="30">E</text></g><text class="face" x="27" y="29">TOP</text></svg>
      <button class="wcs">WCS<i class="chev"></i></button>
    </div>
    <div class="navbar"><svg viewBox="0 0 12 83"><path d="M0 0h12v83H0z" fill="#555a5f"/><g fill="none" stroke="#686e74" stroke-width=".9"><circle cx="6" cy="12" r="3.500"/><path d="M3 28v7M6 26v8M9 28v7M3 35q3 4 6 0M3 46l6-6M9 46l-6-6M6 51v9M2 56h8"/><circle cx="6" cy="71" r="3.500"/><path d="M2 71h8"/></g></svg></div>
    <div class="command">
      <div class="history"><span>Window Lasso&nbsp; Press Spacebar to cycle options</span><span>Window Lasso&nbsp; Press Spacebar to cycle options</span><span>Command: Specify opposite corner or [Fence/WPolygon/CPolygon]:</span></div>
      <div class="entry">
        <button class="ib" aria-label="Close command line"><svg><use href="#i-close"/></svg></button>
        <button class="ib" aria-label="Customize"><svg><use href="#i-wrench"/></svg></button>
        <label class="field"><svg viewBox="0 0 8 8"><path d="M1 1.500h6v5H1z" fill="#e8eaec" stroke="#596069" stroke-width=".6"/><path d="M1 1.500h6v1.200H1z" fill="#596069"/></svg><i class="chev dark"></i><input type="text" placeholder="Type a command" aria-label="Command"><i class="up"></i></label>
      </div>
    </div>
  </main>

  <footer class="status">
    <div class="layouts"><button class="ib" aria-label="Layouts menu"><svg><use href="#i-menu"/></svg></button><button class="file on">Model</button><button class="file">dwgmodels.com</button><button class="ib" aria-label="New layout"><svg><use href="#i-plus"/></svg></button></div>
    <div class="toggles">
      <button class="model">MODEL</button>
      <button class="ib" aria-label="Grid"><svg><use href="#i-grid"/></svg></button><button class="ib" aria-label="Snap"><svg><use href="#i-snap"/></svg></button><i class="chev"></i>
      <button class="ib" aria-label="Ortho"><svg><use href="#i-ortho"/></svg></button><button class="ib lit" aria-label="Polar"><svg><use href="#i-polar"/></svg></button><i class="chev"></i>
      <button class="ib" aria-label="Isometric"><svg><use href="#i-iso"/></svg></button><i class="chev"></i>
      <button class="ib lit" aria-label="Object tracking"><svg><use href="#i-track"/></svg></button><button class="ib lit" aria-label="Object snap"><svg><use href="#i-osnap"/></svg></button><i class="chev"></i>
      <button class="ib lit" aria-label="Annotation visibility"><svg><use href="#i-person"/></svg></button><button class="ib" aria-label="Auto scale"><svg><use href="#i-person"/></svg></button><button class="ib" aria-label="Annotation scale"><svg><use href="#i-person"/></svg></button>
      <button class="ratio">1:1</button><i class="chev"></i>
      <button class="ib" aria-label="Workspace"><svg><use href="#i-gear"/></svg></button><i class="chev"></i>
      <button class="ib" aria-label="Monitor"><svg><use href="#i-plus"/></svg></button><button class="ib" aria-label="Isolate objects"><svg><use href="#i-isolate"/></svg></button><button class="ib" aria-label="Hardware"><svg><use href="#i-hw"/></svg></button><button class="ib" aria-label="Clean screen"><svg><use href="#i-clean"/></svg></button><button class="ib" aria-label="Customization"><svg><use href="#i-menu"/></svg></button>
    </div>
  </footer>
</div>
</body>
</html>
```
FILE: styles.css
```css
* { box-sizing: border-box; }
html, body { height: 100%; margin: 0; }
body { background: #1b5878; color: #ccd1d8; font: 5px/6px "Liberation Sans", Arial, sans-serif; }
button { margin: 0; padding: 0; border: 0; background: none; color: inherit; font: inherit; white-space: nowrap; }
input, select { margin: 0; padding: 0; border: 0; background: none; color: inherit; font: inherit; min-width: 0; outline: 0; }
select { appearance: none; }
svg { display: block; flex: none; overflow: visible; }
.defs { position: absolute; width: 0; height: 0; }

.window { display: flex; flex-direction: column; min-height: 100vh; background: #222933; border: solid #174e6b; border-width: 2px 3px 2px 2px; }
.chev { display: inline-block; flex: none; width: 3px; height: 2px; background: #b6bdc6; clip-path: polygon(0 0, 100% 0, 50% 100%); }
.chev.dim { background: #7b838e; }
.chev.end { margin-left: auto; }
.ib { display: flex; align-items: center; justify-content: center; flex: none; width: 9px; height: 10px; }
.ib svg { width: 7px; height: 7px; }

.titlebar { display: grid; grid-template-columns: auto 1fr auto; align-items: center; height: 11px; }
.quick, .account { display: flex; align-items: center; }
.quick { padding-left: 4px; }
.quick .ib { width: 10px; }
.quick .ib.first { margin-left: 2px; }
.app { width: 9px; height: 9px; margin-right: 3px; background: #d91f47; color: #fff; font-size: 7px; line-height: 9px; text-align: center; }
.chev.more { margin: 0 3px 0 4px; }
.share { display: flex; align-items: center; gap: 2px; color: #68a7cc; }
.share svg { width: 6px; height: 6px; }
.caption { display: flex; justify-content: center; gap: 4px; }
.caption span { white-space: nowrap; color: #b8bdc5; }
.play { width: 2px; height: 3px; margin-right: 4px; background: #dfe3e8; clip-path: polygon(0 0, 100% 50%, 0 100%); }
.search { width: 71px; height: 8px; padding-left: 2px; background: #434b5c; }
.search::placeholder { color: #9fa6b3; opacity: 1; }
.user { width: 41px; height: 10px; margin-right: 8px; background: linear-gradient(90deg, #2b4a5e 10px, #2b303b 10px); }
.trial { display: flex; align-items: center; gap: 2px; width: 17px; height: 10px; margin-right: 2px; padding-left: 2px; background: #625ee6; color: #dedcff; }
.trial svg { width: 6px; height: 6px; }
.account .chev { margin: 0 1px; }
.help { margin-left: 6px; }
.controls { display: flex; gap: 9px; margin-left: 11px; padding-right: 3px; }

.tabs { display: flex; align-items: flex-end; gap: 1px; height: 10px; padding-left: 3px; color: #858d99; }
.tabs button { height: 9px; padding: 0 3px; }
.tabs .on { background: #3b4453; color: #dde1e6; }
.tabs .mini { display: flex; align-items: center; gap: 2px; padding-left: 8px; }
.mini span { width: 6px; height: 3px; background: #e5e8ec; }

.ribbon { display: flex; height: 39px; margin-right: 2px; background: #3b4453; }
.panel { display: flex; flex-direction: column; flex: none; border-right: 1px solid #2f3744; }
.p-draw { width: 89px; } .p-modify { width: 100px; } .p-anno { width: 75px; } .p-layers { width: 110px; } .p-block { width: 95px; }
.p-props { width: 108px; } .p-groups { width: 28px; } .p-utils { width: 38px; } .p-clip { width: 36px; } .p-view { width: 27px; border-right: 0; }
.panel h2 { display: flex; align-items: center; justify-content: center; gap: 2px; height: 7px; margin: 0; font: inherit; }
.body { display: flex; height: 32px; padding: 1px 1px 0; }
.big { display: flex; flex-direction: column; align-items: center; flex: none; width: 18px; padding-top: 2px; line-height: 7px; }
.big svg { width: 13px; height: 13px; margin-bottom: 2px; }
.big .chev { margin-top: 1px; }
.big.wide { width: 25px; white-space: normal; line-height: 6px; }
.glyph { height: 15px; color: #f2f4f7; font-size: 15px; line-height: 14px; }
.col { display: grid; grid-template-rows: repeat(3, 10px); align-content: start; min-width: 0; }
.col button { display: flex; align-items: center; gap: 2px; padding: 0 1px; min-width: 0; }
.col svg { width: 7px; height: 7px; }
.c28 { flex: 0 0 28px; }
.grow { flex: 1; }
.p-modify .body { padding-left: 2px; }
.p-draw .col { margin-left: 2px; }
.icons { display: flex; }
.icons button { flex: none; height: 10px; }
.combo { display: flex; align-items: center; gap: 2px; flex: 1; height: 7px; margin: 1px 1px 1px 0; padding: 0 2px 0 1px; min-width: 0; background: #4b566b linear-gradient(#c7ccd4, #c7ccd4) no-repeat right 2px center / 2px 1px; }
.combo select { flex: 1; height: 7px; }
.p-props .combo { margin: 0; }
.prop { display: flex; align-items: center; gap: 2px; }
.swatch { flex: none; width: 6px; height: 6px; background: #fff; }
.stroke { flex: none; width: 25px; height: 1px; background: #c3c9d1; }
.active { background: #367b96; }
.p-groups .big, .p-clip .big { width: 17px; }

.files { display: flex; align-items: center; height: 13px; padding-left: 5px; border-bottom: 2px solid #373f48; }
.file { display: flex; align-items: center; gap: 3px; height: 10px; padding: 0 4px; }
.files .ib { margin-right: 5px; }
.files .file + .ib { margin-left: 2px; }
.file svg { width: 6px; height: 6px; }
.file.on { background: #3b4453; color: #fff; font-weight: bold; }

.canvas { position: relative; display: flex; flex: 1; min-height: 0; background: #212830; }
.drawing { flex: 1; width: 100%; min-width: 0; }
.drawing text { font-family: "Liberation Sans", Arial, sans-serif; text-anchor: middle; }
.axis text { fill: #b9bec3; font-size: 4px; }
.dims text { fill: #10bc2e; font-size: 4px; font-weight: bold; }
.rooms text { fill: #12a02c; font-size: 3px; }
.viewlabel { position: absolute; top: 2px; left: 2px; color: #b3b8bf; }
.docbuttons { position: absolute; top: 0; right: 2px; display: flex; }
.docbuttons .ib { width: 8px; }
.docbuttons svg { width: 5px; height: 5px; }
.cube { position: absolute; top: 14px; right: 6px; display: flex; flex-direction: column; align-items: center; gap: 8px; }
.cube > svg { width: 54px; height: 54px; }
.cube text { text-anchor: middle; }
.compass { fill: #b5b9be; font-size: 9px; font-weight: bold; }
.face { fill: #565b61; font-size: 5px; font-weight: bold; }
.wcs { display: flex; align-items: center; justify-content: space-between; width: 19px; height: 7px; padding: 0 2px; border-radius: 1px; background: #a5a9ad; color: #747a81; }
.navbar { position: absolute; top: 92px; right: 1px; width: 12px; }
.command { position: absolute; left: 20%; right: 20%; bottom: 0; }
.history { display: flex; flex-direction: column; align-items: flex-start; gap: 1px; padding: 0 0 1px 27px; }
.history span { background: #656a70; color: #e1e4e7; font: 5px/7px "Liberation Mono", monospace; }
.entry { display: flex; align-items: center; gap: 1px; padding-left: 5px; }
.field { display: flex; align-items: center; gap: 2px; flex: 1; height: 9px; padding: 0 3px; background: #bfc1c3; }
.field svg { width: 7px; height: 7px; }
.field input { flex: 1; color: #30363e; font: italic 5px/7px "Liberation Mono", monospace; }
.field input::placeholder { color: #5e6369; opacity: 1; }
.chev.dark { background: #444b53; }
.up { width: 3px; height: 2px; background: #4c5259; clip-path: polygon(50% 0, 100% 100%, 0 100%); }

.status { display: flex; align-items: center; justify-content: space-between; height: 13px; border-top: 1px solid #2b323c; }
.layouts, .toggles { display: flex; align-items: center; }
.layouts { padding-left: 5px; gap: 2px; }
.layouts .file { padding: 0 5px; }
.toggles .ib { width: 10px; }
.toggles .chev { margin: 0 3px 0 2px; }
.model { margin-right: 2px; font-weight: bold; }
.lit { background: #4a86c4; }
```
